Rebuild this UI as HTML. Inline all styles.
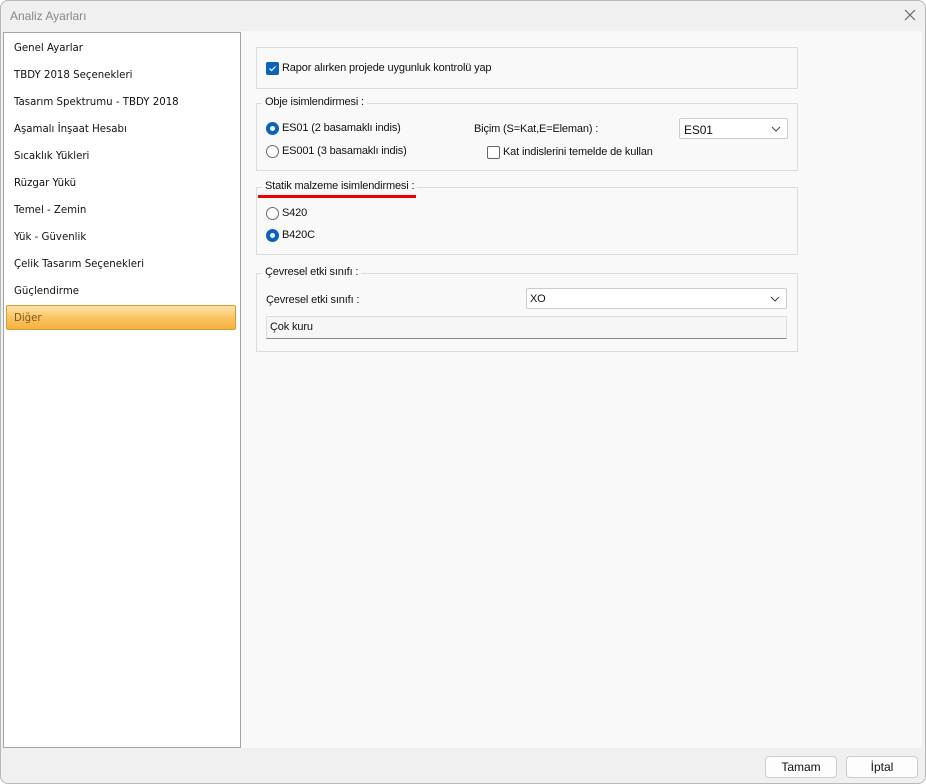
<!DOCTYPE html>
<html><head><meta charset="utf-8"><style>
*{box-sizing:border-box;margin:0;padding:0}
body{width:926px;height:784px;background:#fff;font-family:"Liberation Sans",sans-serif;font-size:11px;letter-spacing:-0.15px;color:#111;position:relative;overflow:hidden}
.win{position:absolute;left:0;top:0;width:926px;height:784px;background:#f0f0f0;border-radius:8px;overflow:hidden}
.frame{position:absolute;left:0;top:0;width:926px;height:784px;border:1px solid #b8b8b8;border-radius:8px;pointer-events:none}
.title{position:absolute;left:10px;top:9px;color:#888;font-size:12px;letter-spacing:0}
.x{position:absolute;left:903px;top:8px;width:14px;height:14px}
.nav{position:absolute;left:3px;top:32px;width:238px;height:716px;background:#fff;border:1px solid #a5a5a5}
.nav div{position:absolute;left:10px;font-family:"DejaVu Sans",sans-serif;font-size:10.2px;letter-spacing:0;color:#111}
.sel{position:absolute;left:2px;top:272px;width:230px;height:25px;border:1px solid #d59a3a;border-radius:2px;background:linear-gradient(#fde2a8,#f9c35e 55%,#f6b13e)}
.main{position:absolute;left:241px;top:31px;width:681px;height:717px;background:#f9f9f9}
.g{position:absolute;border:1px solid #dcdcdc}
.lg{position:absolute;background:#f9f9f9;padding:0 3px;top:-8px;left:5px}
.t{position:absolute;white-space:nowrap}
.rad{position:absolute;width:13px;height:13px;border-radius:50%;border:1px solid #6b6b6b;background:#fff}
.rad.on{border:none;background:#0a63c0}
.rad.on:after{content:"";position:absolute;left:4px;top:4px;width:5px;height:5px;border-radius:50%;background:#fff}
.cb{position:absolute;width:13px;height:13px;border:1px solid #666;border-radius:2px;background:#fff}
.sb{position:absolute;background:#fff;border:1px solid #ccc;border-radius:2px}
.btn{position:absolute;top:756px;width:72px;height:22px;border:1px solid #ccc;border-radius:4px;background:#fdfdfd;text-align:center;line-height:20px;font-size:12px;letter-spacing:0}
</style></head><body><div class="win">
<div class="title">Analiz Ayarları</div>
<svg class="x" viewBox="0 0 14 14"><path d="M2 2L12 12M12 2L2 12" stroke="#666" stroke-width="1.2"/></svg>
<div class="nav">
<div style="top:10px">Genel Ayarlar</div>
<div style="top:37px">TBDY 2018 Seçenekleri</div>
<div style="top:64px">Tasarım Spektrumu - TBDY 2018</div>
<div style="top:91px">Aşamalı İnşaat Hesabı</div>
<div style="top:118px">Sıcaklık Yükleri</div>
<div style="top:145px">Rüzgar Yükü</div>
<div style="top:172px">Temel - Zemin</div>
<div style="top:199px">Yük - Güvenlik</div>
<div style="top:226px">Çelik Tasarım Seçenekleri</div>
<div style="top:253px">Güçlendirme</div>
<span class="sel"></span>
<div style="top:280px;color:#7a5a20">Diğer</div>
</div>
<div class="main">
<div class="g" style="left:15px;top:16px;width:542px;height:42px">
<div class="cb" style="left:9px;top:14px;background:#0a63c0;border-color:#0a63c0"><svg width="11" height="11" style="position:absolute;left:0;top:0"><path d="M2.5 5.5L4.5 7.5L8.5 3.5" stroke="#fff" fill="none" stroke-width="1.2"/></svg></div>
<div class="t" style="left:25px;top:14px">Rapor alırken projede uygunluk kontrolü yap</div>
</div>
<div class="g" style="left:15px;top:72px;width:542px;height:68px">
<div class="lg t">Obje isimlendirmesi :</div>
<div class="rad on" style="left:9px;top:18px"></div><div class="t" style="left:25px;top:18px">ES01 (2 basamaklı indis)</div>
<div class="rad" style="left:9px;top:41px"></div><div class="t" style="left:25px;top:41px">ES001 (3 basamaklı indis)</div>
<div class="t" style="left:217px;top:19px">Biçim (S=Kat,E=Eleman) :</div>
<div class="cb" style="left:230px;top:42px"></div><div class="t" style="left:246px;top:42px">Kat indislerini temelde de kullan</div>
<div class="sb" style="left:422px;top:14px;width:109px;height:21px"><span class="t" style="left:4px;top:4px;font-size:12px">ES01</span><svg style="position:absolute;right:6px;top:6px" width="10" height="8"><path d="M1 2L5 6L9 2" stroke="#444" fill="none"/></svg></div>
</div>
<div class="g" style="left:15px;top:156px;width:542px;height:68px">
<div class="lg t">Statik malzeme isimlendirmesi :</div>
<div style="position:absolute;left:1px;top:7px;width:158px;height:3px;background:#e00"></div>
<div class="rad" style="left:9px;top:19px"></div><div class="t" style="left:25px;top:19px">S420</div>
<div class="rad on" style="left:9px;top:41px"></div><div class="t" style="left:25px;top:41px">B420C</div>
</div>
<div class="g" style="left:15px;top:242px;width:542px;height:79px">
<div class="lg t">Çevresel etki sınıfı :</div>
<div class="t" style="left:9px;top:20px">Çevresel etki sınıfı :</div>
<div class="sb" style="left:269px;top:14px;width:261px;height:21px"><span class="t" style="left:3px;top:4px">XO</span><svg style="position:absolute;right:6px;top:6px" width="10" height="8"><path d="M1 2L5 6L9 2" stroke="#444" fill="none"/></svg></div>
<div style="position:absolute;left:9px;top:42px;width:521px;height:23px;background:#f6f6f6;border:1px solid #ddd;border-bottom:1px solid #888"><span class="t" style="left:3px;top:4px">Çok kuru</span></div>
</div>
</div>
<div class="btn" style="left:765px">Tamam</div>
<div class="btn" style="left:846px">İptal</div>
</div><div class="frame"></div></body></html>
